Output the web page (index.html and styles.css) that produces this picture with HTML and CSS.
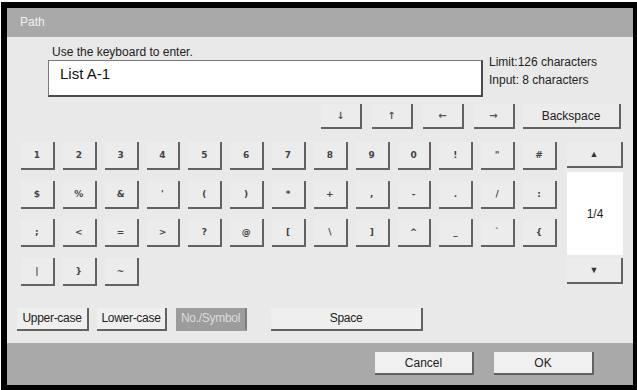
FILE: index.html
```html
<!DOCTYPE html>
<html>
<head>
<meta charset="utf-8">
<link rel="stylesheet" href="styles.css">
</head>
<body>
<div class="frame">
  <div class="titlebar">Path</div>
  <div class="main">
    <div class="entry">
      <div class="entry-col">
        <div class="prompt">Use the keyboard to enter.</div>
        <div class="inputbox">List A-1</div>
      </div>
      <div class="info">
        <div>Limit:126 characters</div>
        <div>Input: 8 characters</div>
      </div>
    </div>
    <div class="arrows">
      <div class="key akey">&#8595;</div>
      <div class="key akey">&#8593;</div>
      <div class="key akey">&#8592;</div>
      <div class="key akey">&#8594;</div>
      <div class="key bskey">Backspace</div>
    </div>
    <div class="kbd">
      <div class="grid">
        <div class="key g">1</div><div class="key g">2</div><div class="key g">3</div><div class="key g">4</div><div class="key g">5</div><div class="key g">6</div><div class="key g">7</div><div class="key g">8</div><div class="key g">9</div><div class="key g">0</div><div class="key g">!</div><div class="key g">"</div><div class="key g">#</div>
        <div class="key g">$</div><div class="key g">%</div><div class="key g">&amp;</div><div class="key g">'</div><div class="key g">(</div><div class="key g">)</div><div class="key g">*</div><div class="key g">+</div><div class="key g">,</div><div class="key g">-</div><div class="key g">.</div><div class="key g">/</div><div class="key g">:</div>
        <div class="key g">;</div><div class="key g">&lt;</div><div class="key g">=</div><div class="key g">&gt;</div><div class="key g">?</div><div class="key g">@</div><div class="key g">[</div><div class="key g">\</div><div class="key g">]</div><div class="key g">^</div><div class="key g">_</div><div class="key g">`</div><div class="key g">{</div>
        <div class="key g">|</div><div class="key g">}</div><div class="key g">~</div>
      </div>
      <div class="pager">
        <div class="key pkey">&#9650;</div>
        <div class="pagebox">1/4</div>
        <div class="key pkey">&#9660;</div>
      </div>
    </div>
    <div class="modes">
      <div class="key mkey w72">Upper-case</div>
      <div class="key mkey w70">Lower-case</div>
      <div class="key mkey w71 active">No./Symbol</div>
      <div class="key mkey space">Space</div>
    </div>
  </div>
  <div class="footer">
    <div class="key fkey">Cancel</div>
    <div class="key fkey ok">OK</div>
  </div>
</div>
</body>
</html>
```
FILE: styles.css
```css
html, body {
  margin: 0;
  padding: 0;
  background: #ffffff;
}
body {
  font-family: "Liberation Sans", Arial, sans-serif;
  color: #222;
}
.frame {
  margin: 2px 0 0 1px;
  width: 626px;
  height: 377px;
  border-style: solid;
  border-color: #000;
  border-width: 6px 4px 5px 6px;
  display: flex;
  flex-direction: column;
  background: #e8e8e8;
}
.titlebar {
  height: 29px;
  background: #a9a9a9;
  color: #f2f2f2;
  font-size: 12px;
  line-height: 29px;
  padding-left: 13px;
}
.main {
  height: 306px;
  box-sizing: border-box;
  padding: 9px 10px 0 10px;
  background: #e9e9e9;
  display: flex;
  flex-direction: column;
}
.entry {
  display: flex;
  margin-left: 31px;
}
.entry-col {
  width: 435px;
  display: flex;
  flex-direction: column;
}
.prompt {
  font-size: 12px;
  line-height: 13px;
  padding-left: 4px;
  margin-bottom: 1px;
  color: #222;
}
.inputbox {
  height: 37px;
  box-sizing: border-box;
  background: #fff;
  border-top: 1px solid #7a7a7a;
  border-left: 1px solid #7a7a7a;
  border-right: 2px solid #4a4a4a;
  border-bottom: 2px solid #4a4a4a;
  font-size: 15px;
  padding: 4px 0 0 11px;
  line-height: 18px;
  color: #111;
}
.info {
  margin-left: 6px;
  padding-top: 7px;
  font-size: 12px;
  line-height: 18px;
  color: #222;
}
.key {
  box-sizing: border-box;
  background: #ececec;
  border-right: 2px solid #626262;
  border-bottom: 2px solid #626262;
  display: flex;
  align-items: center;
  justify-content: center;
  color: #222;
}
.arrows {
  display: flex;
  margin-top: 7px;
  margin-left: 304px;
  height: 25px;
}
.akey {
  width: 41px;
  margin-right: 10px;
  font-family: "DejaVu Sans", sans-serif;
  font-size: 10px;
  font-weight: bold;
  color: #555;
}
.bskey {
  width: 98px;
  margin-left: -2px;
  font-size: 12px;
}
.kbd {
  display: flex;
  margin-top: 13px;
  margin-left: 4px;
}
.grid {
  width: 536px;
  display: grid;
  grid-template-columns: repeat(13, 1fr);
  grid-auto-rows: 28px;
  column-gap: 8px;
  row-gap: 10.5px;
}
.g {
  font-family: "DejaVu Sans", sans-serif;
  font-size: 9px;
  font-weight: bold;
  color: #444;
}
.pager {
  width: 56px;
  margin-left: 10px;
  display: flex;
  flex-direction: column;
}
.pkey {
  height: 26px;
  font-size: 9px;
  color: #333;
}
.pagebox {
  height: 83px;
  margin: 4px 0 3px 0;
  background: #fff;
  display: flex;
  align-items: center;
  justify-content: center;
  font-size: 12px;
  color: #222;
}
.modes {
  display: flex;
  margin-top: 22px;
  height: 23px;
}
.mkey {
  font-size: 12px;
  background: #efefef;
  letter-spacing: -0.3px;
}
.w72 { width: 72px; }
.w70 { width: 70px; margin-left: 8px; }
.w71 { width: 71px; margin-left: 9px; }
.active {
  background: #9c9c9c;
  color: #dcdcdc;
  border-right-color: #7c7c7c;
  border-bottom-color: #9c9c9c;
}
.space {
  width: 152px;
  margin-left: 24px;
}
.footer {
  height: 42px;
  background: #a9a9a9;
  display: flex;
  align-items: flex-start;
  padding-top: 9px;
  box-sizing: border-box;
  padding-left: 368px;
}
.fkey {
  width: 99px;
  height: 23px;
  font-size: 12px;
  background: #f0f0f0;
}
.ok {
  width: 100px;
  margin-left: 20px;
}
```
